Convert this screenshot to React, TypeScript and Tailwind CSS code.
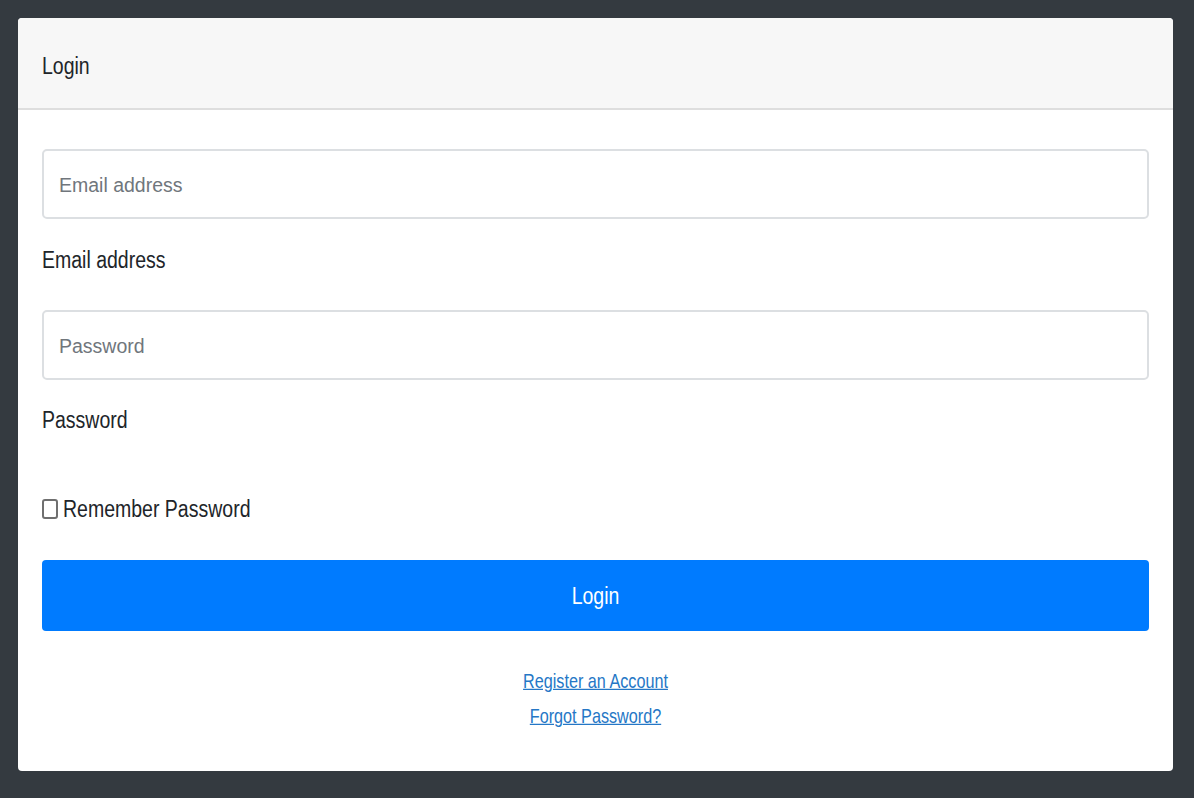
import React from 'react';

const font = { fontFamily: '"Liberation Sans", Arial, sans-serif' };

// the reference is a tall, narrow rendering of the text, so stretch glyphs vertically
const Tall: React.FC<{ children: React.ReactNode; className?: string }> = ({ children, className = '' }) => (
    <span className={`inline-block scale-y-[1.25] ${className}`}>{children}</span>
);

export default function App() {
    return (
        <div className="min-h-screen bg-[#343a40] pl-[18px] pr-[21px] pt-[18px] pb-[27px]" style={font}>
            <div className="bg-white rounded-[4px] overflow-hidden">
                <div className="h-[92px] bg-[#f7f7f7] border-b-2 border-[#dedede] flex items-center px-6 pt-[6px]">
                    <Tall className="text-[19.5px] text-[#212529]">Login</Tall>
                </div>

                <div className="px-6 pt-[39px] pb-[44px] flex flex-col">
                    <input
                        type="email"
                        placeholder="Email address"
                        className="h-[70px] w-full rounded-[5px] border-2 border-[#dcdfe2] px-[15px] pt-[3px] text-[19.5px] text-[#495057] placeholder:text-[#70767c] outline-none"
                        style={font}
                    />
                    <label className="mt-[25px] h-[30px] leading-[30px] text-[19.5px] text-[#212529]">
                        <Tall>Email address</Tall>
                    </label>

                    <input
                        type="password"
                        placeholder="Password"
                        className="mt-[36px] h-[70px] w-full rounded-[5px] border-2 border-[#dcdfe2] px-[15px] pt-[3px] text-[19.5px] text-[#495057] placeholder:text-[#70767c] outline-none"
                        style={font}
                    />
                    <label className="mt-[24px] h-[30px] leading-[30px] text-[19.5px] text-[#212529]">
                        <Tall>Password</Tall>
                    </label>

                    <label className="mt-[60px] h-[30px] flex items-center gap-[5px] text-[19.5px] text-[#212529]">
                        <span className="w-[16px] h-[20px] rounded-[3px] border-2 border-[#6f6f6f] bg-white shrink-0" />
                        <Tall>Remember Password</Tall>
                    </label>

                    <button className="mt-[36px] h-[71px] w-full rounded-[4px] bg-[#007bff] text-white text-[19.5px]" style={font}>
                        <Tall>Login</Tall>
                    </button>

                    <div className="mt-[37px] flex flex-col items-center gap-[11px] text-[16.2px] leading-[24px]">
                        <a href="#" className="text-[#2577c6]"><Tall className="underline">Register an Account</Tall></a>
                        <a href="#" className="text-[#2577c6]"><Tall className="underline">Forgot Password?</Tall></a>
                    </div>
                </div>
            </div>
        </div>
    );
}
